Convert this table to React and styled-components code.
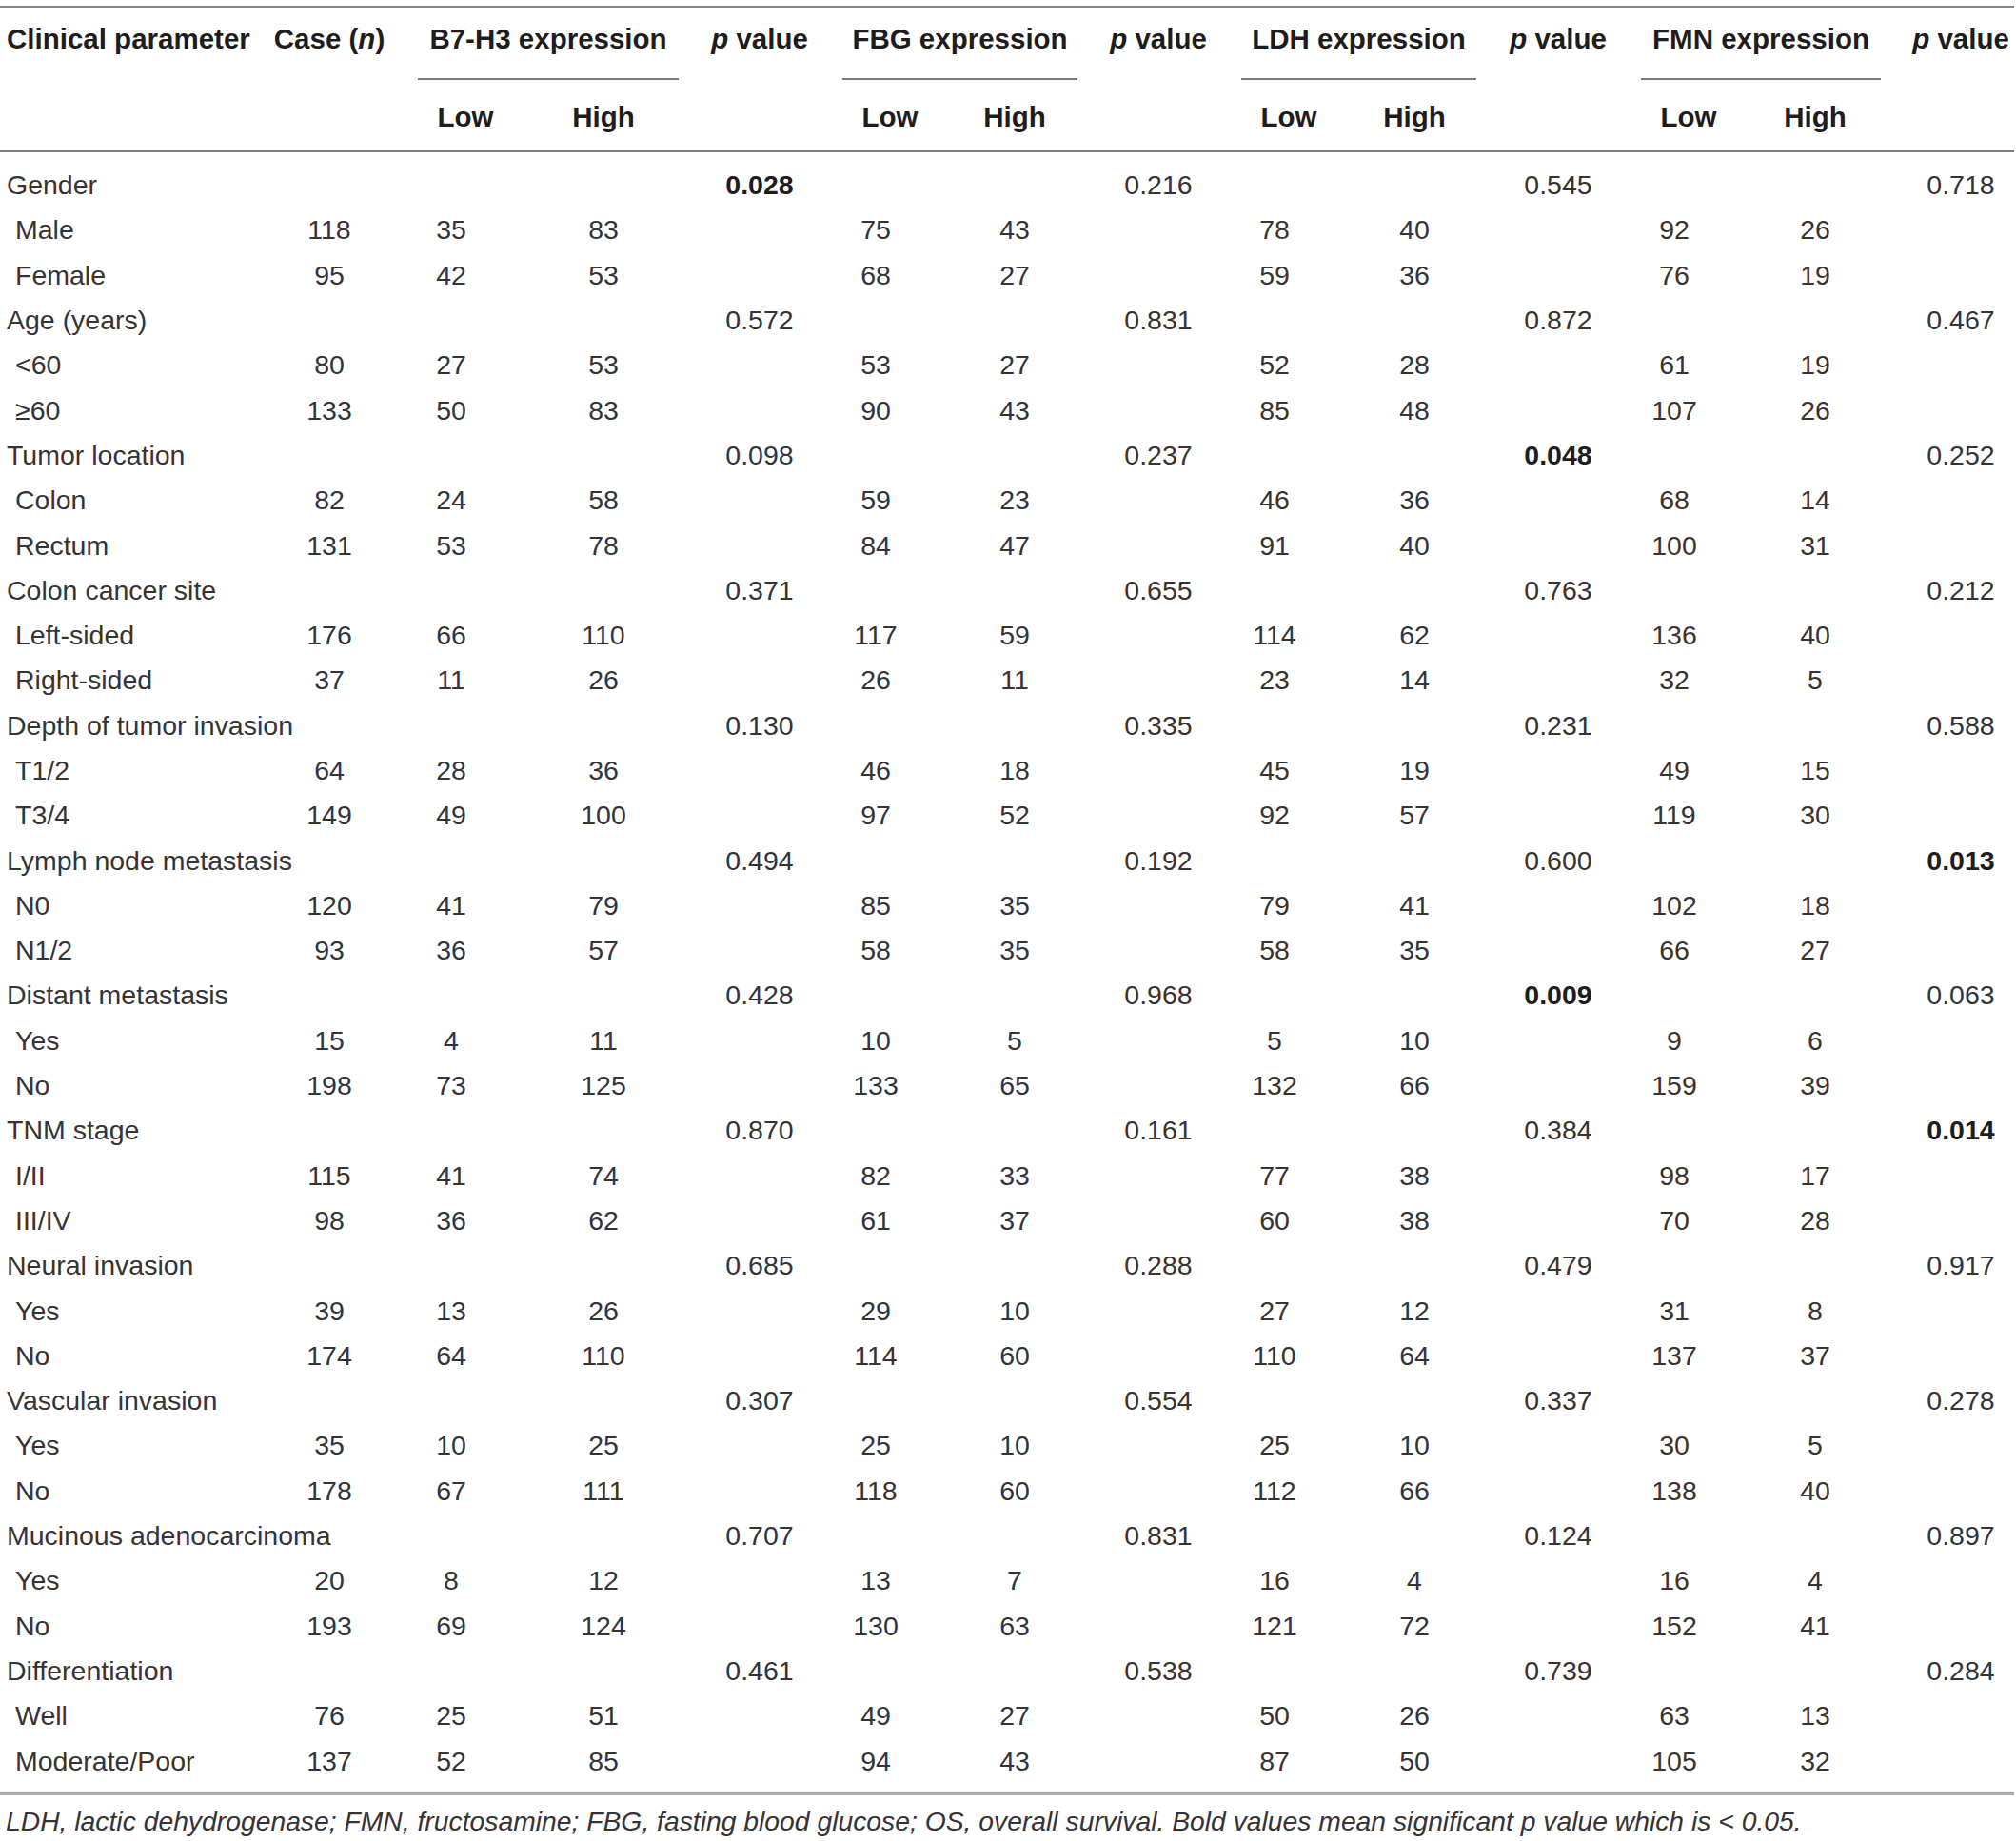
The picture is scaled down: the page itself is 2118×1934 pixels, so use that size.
import React from 'react';
import styled, { createGlobalStyle } from 'styled-components';

const GlobalStyle = createGlobalStyle`
  html, body {
    margin: 0;
    padding: 0;
    background: #ffffff;
  }
  body {
    font-family: "Liberation Sans", Arial, Helvetica, sans-serif;
    color: #231f20;
  }
`;

const COLS = '286px 120px 136px 184px 144px 100px 192px 110px 134px 160px 142px 102px 194px 112px';

const groups = [
  { name: 'Gender', p: ['0.028*', '0.216', '0.545', '0.718'], rows: [
    ['Male', 118, 35, 83, 75, 43, 78, 40, 92, 26],
    ['Female', 95, 42, 53, 68, 27, 59, 36, 76, 19],
  ]},
  { name: 'Age (years)', p: ['0.572', '0.831', '0.872', '0.467'], rows: [
    ['<60', 80, 27, 53, 53, 27, 52, 28, 61, 19],
    ['≥60', 133, 50, 83, 90, 43, 85, 48, 107, 26],
  ]},
  { name: 'Tumor location', p: ['0.098', '0.237', '0.048*', '0.252'], rows: [
    ['Colon', 82, 24, 58, 59, 23, 46, 36, 68, 14],
    ['Rectum', 131, 53, 78, 84, 47, 91, 40, 100, 31],
  ]},
  { name: 'Colon cancer site', p: ['0.371', '0.655', '0.763', '0.212'], rows: [
    ['Left-sided', 176, 66, 110, 117, 59, 114, 62, 136, 40],
    ['Right-sided', 37, 11, 26, 26, 11, 23, 14, 32, 5],
  ]},
  { name: 'Depth of tumor invasion', p: ['0.130', '0.335', '0.231', '0.588'], rows: [
    ['T1/2', 64, 28, 36, 46, 18, 45, 19, 49, 15],
    ['T3/4', 149, 49, 100, 97, 52, 92, 57, 119, 30],
  ]},
  { name: 'Lymph node metastasis', p: ['0.494', '0.192', '0.600', '0.013*'], rows: [
    ['N0', 120, 41, 79, 85, 35, 79, 41, 102, 18],
    ['N1/2', 93, 36, 57, 58, 35, 58, 35, 66, 27],
  ]},
  { name: 'Distant metastasis', p: ['0.428', '0.968', '0.009*', '0.063'], rows: [
    ['Yes', 15, 4, 11, 10, 5, 5, 10, 9, 6],
    ['No', 198, 73, 125, 133, 65, 132, 66, 159, 39],
  ]},
  { name: 'TNM stage', p: ['0.870', '0.161', '0.384', '0.014*'], rows: [
    ['I/II', 115, 41, 74, 82, 33, 77, 38, 98, 17],
    ['III/IV', 98, 36, 62, 61, 37, 60, 38, 70, 28],
  ]},
  { name: 'Neural invasion', p: ['0.685', '0.288', '0.479', '0.917'], rows: [
    ['Yes', 39, 13, 26, 29, 10, 27, 12, 31, 8],
    ['No', 174, 64, 110, 114, 60, 110, 64, 137, 37],
  ]},
  { name: 'Vascular invasion', p: ['0.307', '0.554', '0.337', '0.278'], rows: [
    ['Yes', 35, 10, 25, 25, 10, 25, 10, 30, 5],
    ['No', 178, 67, 111, 118, 60, 112, 66, 138, 40],
  ]},
  { name: 'Mucinous adenocarcinoma', p: ['0.707', '0.831', '0.124', '0.897'], rows: [
    ['Yes', 20, 8, 12, 13, 7, 16, 4, 16, 4],
    ['No', 193, 69, 124, 130, 63, 121, 72, 152, 41],
  ]},
  { name: 'Differentiation', p: ['0.461', '0.538', '0.739', '0.284'], rows: [
    ['Well', 76, 25, 51, 49, 27, 50, 26, 63, 13],
    ['Moderate/Poor', 137, 52, 85, 94, 43, 87, 50, 105, 32],
  ]},
];

const markers = [
  { name: 'B7-H3', ml: 33, mr: 13 },
  { name: 'FBG', ml: 15, mr: 30 },
  { name: 'LDH', ml: 32, mr: 15 },
  { name: 'FMN', ml: 16, mr: 28 },
];

const Page = styled.div`
  padding-top: 6px;
  width: 2116px;
`;

const Table = styled.div`
  border-top: 2px solid #858585;
  border-bottom: 3px solid #ababab;
`;

const Row = styled.div`
  display: grid;
  grid-template-columns: ${COLS};
  align-items: ${p => (p.$top ? 'start' : 'center')};
`;

const HeadTop = styled(Row)`
  padding-top: 16px;
`;

const HeadSub = styled(Row)`
  padding-top: 22px;
  padding-bottom: 18px;
  border-bottom: 2px solid #7d7d7d;
`;

const HeadCell = styled.div`
  font-weight: 700;
  font-size: 29.5px;
  line-height: 34px;
  white-space: nowrap;
  text-align: ${p => (p.$left ? 'left' : 'center')};
  padding-left: ${p => p.$pl || 0}px;
  color: #1e1c1d;

  em {
    font-style: italic;
  }
`;

const GroupHead = styled.div`
  grid-column: span 2;
  display: flex;
  flex-direction: column;
  margin-left: ${p => p.$ml}px;
  margin-right: ${p => p.$mr}px;
`;

const GroupTitle = styled(HeadCell)`
  margin-bottom: 24px;
`;

const GroupRule = styled.div`
  height: 2px;
  background: #7d7d7d;
`;

const Body = styled.div`
  padding: 10.5px 0 10px;
`;

const DataRow = styled(Row)`
  height: 47.3px;
`;

const Cell = styled.div`
  font-size: 28.5px;
  line-height: 34px;
  white-space: nowrap;
  text-align: ${p => (p.$left ? 'left' : 'center')};
  padding-left: ${p => p.$pl || 0}px;
  font-weight: ${p => (p.$bold ? 700 : 400)};
  color: ${p => (p.$bold ? '#1e1c1d' : '#363334')};
`;

const Footnote = styled.div`
  margin-top: 10px;
  padding-left: 6px;
  font-size: 28.3px;
  line-height: 34px;
  font-style: italic;
  color: #363334;
`;

const PCell = ({ value }) => {
  const bold = value.endsWith('*');
  return <Cell $bold={bold}>{bold ? value.slice(0, -1) : value}</Cell>;
};

const PValueHead = () => (
  <HeadCell><em>p</em> value</HeadCell>
);

export default function App() {
  return (
    <Page>
      <GlobalStyle />
      <Table>
        <HeadTop $top>
          <HeadCell $left $pl={7}>Clinical parameter</HeadCell>
          <HeadCell>Case (<em>n</em>)</HeadCell>
          {markers.map(m => (
            <React.Fragment key={m.name}>
              <GroupHead $ml={m.ml} $mr={m.mr}>
                <GroupTitle>{m.name} expression</GroupTitle>
                <GroupRule />
              </GroupHead>
              <PValueHead />
            </React.Fragment>
          ))}
        </HeadTop>
        <HeadSub>
          <div />
          <div />
          {markers.map(m => (
            <React.Fragment key={m.name}>
              <HeadCell $pl={30}>Low</HeadCell>
              <HeadCell>High</HeadCell>
              <div />
            </React.Fragment>
          ))}
        </HeadSub>
        <Body>
          {groups.map(g => (
            <React.Fragment key={g.name}>
              <DataRow>
                <Cell $left $pl={7}>{g.name}</Cell>
                <div />
                {g.p.map((pv, i) => (
                  <React.Fragment key={i}>
                    <div />
                    <div />
                    <PCell value={pv} />
                  </React.Fragment>
                ))}
              </DataRow>
              {g.rows.map((r, ri) => (
                <DataRow key={ri}>
                  <Cell $left $pl={16}>{r[0]}</Cell>
                  <Cell>{r[1]}</Cell>
                  {[0, 1, 2, 3].map(k => (
                    <React.Fragment key={k}>
                      <Cell>{r[2 + k * 2]}</Cell>
                      <Cell>{r[3 + k * 2]}</Cell>
                      <div />
                    </React.Fragment>
                  ))}
                </DataRow>
              ))}
            </React.Fragment>
          ))}
        </Body>
      </Table>
      <Footnote>
        LDH, lactic dehydrogenase; FMN, fructosamine; FBG, fasting blood glucose; OS, overall survival. Bold values mean significant p value which is &lt; 0.05.
      </Footnote>
    </Page>
  );
}
